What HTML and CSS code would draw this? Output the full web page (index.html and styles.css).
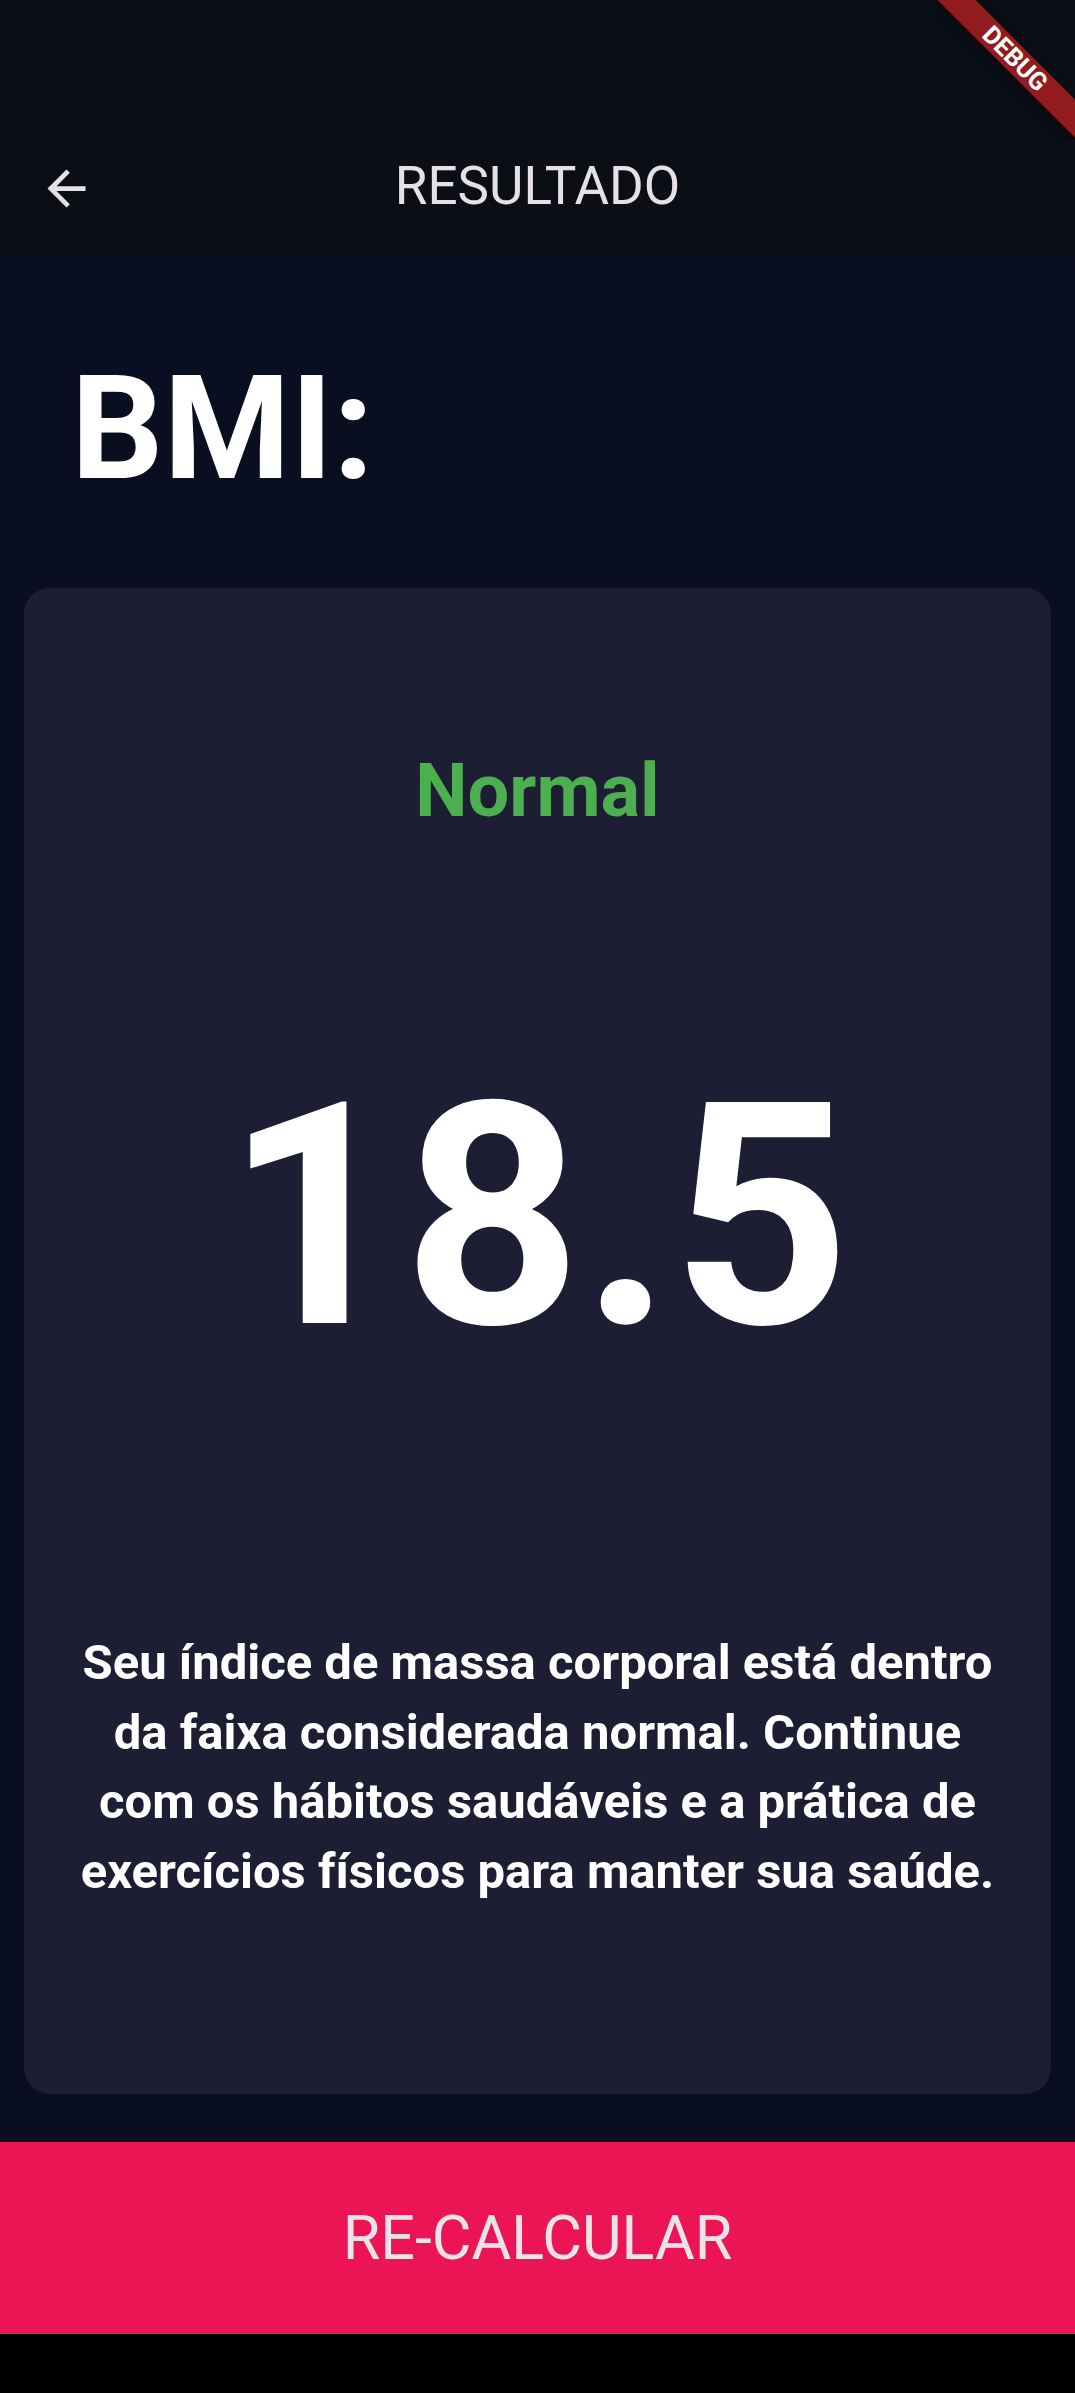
FILE: index.html
```html
<!DOCTYPE html>
<html lang="pt">
<head>
<meta charset="utf-8">
<title>Resultado</title>
<link rel="stylesheet" href="styles.css">
</head>
<body>
<div class="screen">
  <header class="appbar">
    <div class="toolbar">
      <button class="back" aria-label="Voltar">
        <svg viewBox="0 0 24 24" width="57" height="57"><path fill="#e6e1e5" d="M20 11H7.83l5.59-5.59L12 4l-8 8 8 8 1.41-1.41L7.83 13H20v-2z"/></svg>
      </button>
      <h1 class="title">RESULTADO</h1>
      <span class="spacer"></span>
    </div>
  </header>
  <main class="content">
    <h2 class="bmi-label">BMI:</h2>
    <section class="card">
      <p class="status">Normal</p>
      <p class="value">18.5</p>
      <p class="desc">Seu índice de massa corporal está dentro da faixa considerada normal. Continue com os hábitos saudáveis e a prática de exercícios físicos para manter sua saúde.</p>
    </section>
  </main>
  <button class="recalc">RE-CALCULAR</button>
  <div class="navbar"></div>
  <div class="debug-banner"><div class="ribbon">DEBUG</div></div>
</div>
</body>
</html>
```

FILE: styles.css
```css
* { box-sizing: border-box; }
html, body { margin: 0; padding: 0; }
body {
  background: #0a0e21;
  font-family: Roboto, "Noto Sans", "Liberation Sans", sans-serif;
  width: 1075px;
  height: 2393px;
  overflow: hidden;
}
.screen {
  position: relative;
  display: flex;
  flex-direction: column;
  height: 2393px;
}
.appbar {
  background: #0b0e15;
  height: 255px;
  padding-top: 116px;
}
.toolbar {
  height: 139px;
  display: grid;
  grid-template-columns: 140px 1fr 140px;
  align-items: center;
}
.back {
  background: none;
  border: 0;
  padding: 0;
  margin-left: 38px;
  margin-top: 5px;
  width: 57px;
  height: 57px;
  display: flex;
}
.title {
  margin: 0;
  text-align: center;
  font-weight: 400;
  font-size: 53px;
  color: #e6e1e5;
}
.content {
  display: flex;
  flex-direction: column;
}
.bmi-label {
  margin: 0;
  padding: 90px 0 0 71px;
  font-size: 145px;
  font-weight: 700;
  color: #ffffff;
  line-height: 166px;
}
.card {
  margin: 77px 24px 0;
  height: 1506px;
  background: #1d1e33;
  border-radius: 26px;
  display: flex;
  flex-direction: column;
  align-items: center;
  padding-top: 158px;
}
.status {
  margin: 0;
  font-size: 74px;
  font-weight: 700;
  color: #4caf50;
  line-height: 90px;
}
.value {
  margin: 197px 0 0;
  font-size: 311px;
  font-weight: 700;
  color: #ffffff;
  line-height: 368px;
}
.desc {
  margin: 227px 0 0;
  padding: 0 50px;
  font-size: 49px;
  font-weight: 700;
  line-height: 69.5px;
  color: #ffffff;
  text-align: center;
}
.recalc {
  margin-top: 48px;
  height: 192px;
  width: 100%;
  border: 0;
  background: #eb1555;
  color: #ebe3e8;
  font-family: Roboto, "Noto Sans", "Liberation Sans", sans-serif;
  font-size: 61px;
  font-weight: 400;
  display: flex;
  align-items: center;
  justify-content: center;
  padding: 0;
}
.navbar {
  flex: 1;
  background: #000000;
}
.debug-banner {
  position: absolute;
  top: 0;
  right: 0;
  width: 140px;
  height: 140px;
  overflow: hidden;
}
.ribbon {
  position: absolute;
  left: -30px;
  top: 45px;
  width: 220px;
  height: 27px;
  background: #921b1d;
  transform: rotate(45deg);
  color: #ffffff;
  font-size: 25px;
  font-weight: 700;
  line-height: 27px;
  text-align: center;
  box-shadow: 0 3px 6px rgba(0,0,0,0.45);
}
```
